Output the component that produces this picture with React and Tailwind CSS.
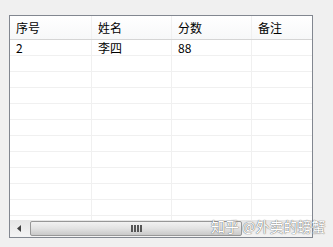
const columns = ["序号", "姓名", "分数", "备注"];
const rows = [["2", "李四", "88", ""]];
const widths = ["w-[82px]", "w-[80px]", "w-[80px]", "flex-1"];

function Cell({ width, children, last }) {
  return (
    <div className={`${width} h-full shrink-0 px-[6px] ${last ? "" : "border-r border-[#f0f0f0]"}`}>
      {children}
    </div>
  );
}

function ScrollBar() {
  return (
    <div className="flex h-[17px] shrink-0 items-stretch bg-gradient-to-b from-[#e6e6e6] to-[#f4f4f4] py-[1px]">
      <div className="flex w-[18px] items-center justify-center">
        <svg width="5" height="7" viewBox="0 0 5 7">
          <path d="M4 0 L0 3.5 L4 7 Z" fill="#404040" />
        </svg>
      </div>
      <div className="ml-[2px] flex w-[212px] items-center justify-center rounded-[2px] border border-[#979797] bg-gradient-to-b from-[#f2f2f2] via-[#e2e2e2] to-[#c9c9c9]">
        <div className="flex gap-[1px]">
          <span className="h-[7px] w-[2px] bg-[#555]" />
          <span className="h-[7px] w-[2px] bg-[#555]" />
          <span className="h-[7px] w-[2px] bg-[#555]" />
          <span className="h-[7px] w-[2px] bg-[#555]" />
        </div>
      </div>
      <div className="flex-1" />
    </div>
  );
}

export default function App() {
  return (
    <div
      className="relative h-[247px] w-[333px] bg-[#f0f0f0] pl-[9px] pt-[15px]"
      style={{ fontFamily: '"Noto Sans CJK SC", "Liberation Sans", sans-serif' }}
    >
      <div className="flex h-[223px] w-[304px] flex-col overflow-hidden border border-[#828790] bg-white text-[12px] text-black">
        <div className="flex h-[24px] shrink-0 items-center border-b border-[#d5d5d5] bg-gradient-to-b from-white to-[#f7f8f9] leading-[24px]">
          {columns.map((c, i) => (
            <Cell key={c} width={widths[i]} last={i === columns.length - 1}>
              {c}
            </Cell>
          ))}
        </div>
        <div className="flex-1 overflow-hidden">
          {Array.from({ length: 12 }).map((_, r) => (
            <div key={r} className="flex h-[16px] border-b border-[#f0f0f0] leading-[15px]">
              {widths.map((w, i) => (
                <Cell key={i} width={w} last={i === widths.length - 1}>
                  {rows[r] ? rows[r][i] : ""}
                </Cell>
              ))}
            </div>
          ))}
        </div>
        <ScrollBar />
      </div>
      <div
        className="absolute left-[211px] top-[217px] whitespace-nowrap text-[14px] leading-[18px] text-white"
        style={{ textShadow: "0 0 1px #666, 0 0 1px #666" }}
      >
        知乎 @外卖的螃蟹
      </div>
    </div>
  );
}
